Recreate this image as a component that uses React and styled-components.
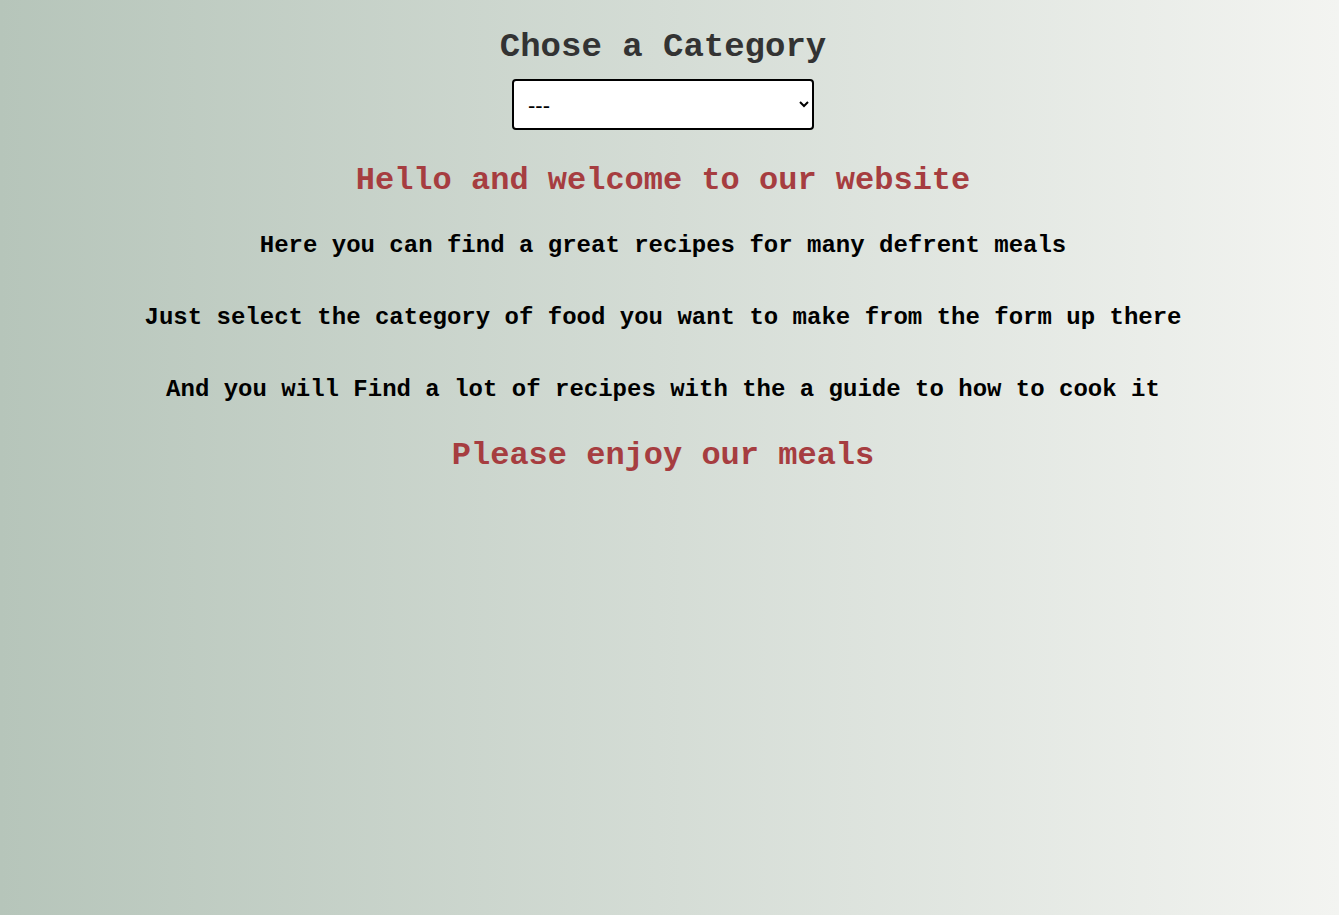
import React, { useState } from "react";
import styled, { createGlobalStyle } from "styled-components";

const GlobalStyle = createGlobalStyle`
  html, body {
    margin: 0;
    padding: 0;
  }
  body {
    font-family: "Liberation Mono", "Courier New", monospace;
  }
`;

function App() {
  const [category, setCategory] = useState("");

  return (
    <Page>
      <GlobalStyle />
      <Title>Chose a Category</Title>
      <CategorySelect
        value={category}
        onChange={(e) => setCategory(e.target.value)}
      >
        <option value="">---</option>
        <option value="beef">Beef</option>
        <option value="chicken">Chicken</option>
        <option value="dessert">Dessert</option>
        <option value="seafood">Seafood</option>
      </CategorySelect>
      <Welcome $top="33px">Hello and welcome to our website</Welcome>
      <Intro $top="33px">Here you can find a great recipes for many defrent meals</Intro>
      <Intro>Just select the category of food you want to make from the form up there</Intro>
      <Intro>And you will Find a lot of recipes with the a guide to how to cook it</Intro>
      <Welcome $top="34px">Please enjoy our meals</Welcome>
    </Page>
  );
}

export default App;

// Styled Components

const Page = styled.div`
  min-height: 100vh;
  box-sizing: border-box;
  padding: 28px 13px 0 0;
  display: flex;
  flex-direction: column;
  align-items: center;
  text-align: center;
  background: linear-gradient(to right, #b6c5ba, #f3f4f1);
`;

const Title = styled.h2`
  margin: 0;
  font-size: 34px;
  line-height: 38px;
  font-weight: bold;
  color: #333333;
`;

const CategorySelect = styled.select`
  margin-top: 13px;
  width: 302px;
  height: 51px;
  padding: 2px 10px 0 10px;
  border: 2px solid #000;
  border-radius: 4px;
  background: #fff;
  font-family: "Liberation Sans", Arial, sans-serif;
  font-size: 22px;
  color: #000;
`;

const Welcome = styled.h2`
  margin: ${(p) => p.$top} 0 0;
  font-size: 32px;
  line-height: 36px;
  font-weight: bold;
  color: #a63d40;
`;

const Intro = styled.p`
  margin: ${(p) => p.$top || "44px"} 0 0;
  font-size: 24px;
  line-height: 28px;
  font-weight: bold;
  color: #000;
`;
